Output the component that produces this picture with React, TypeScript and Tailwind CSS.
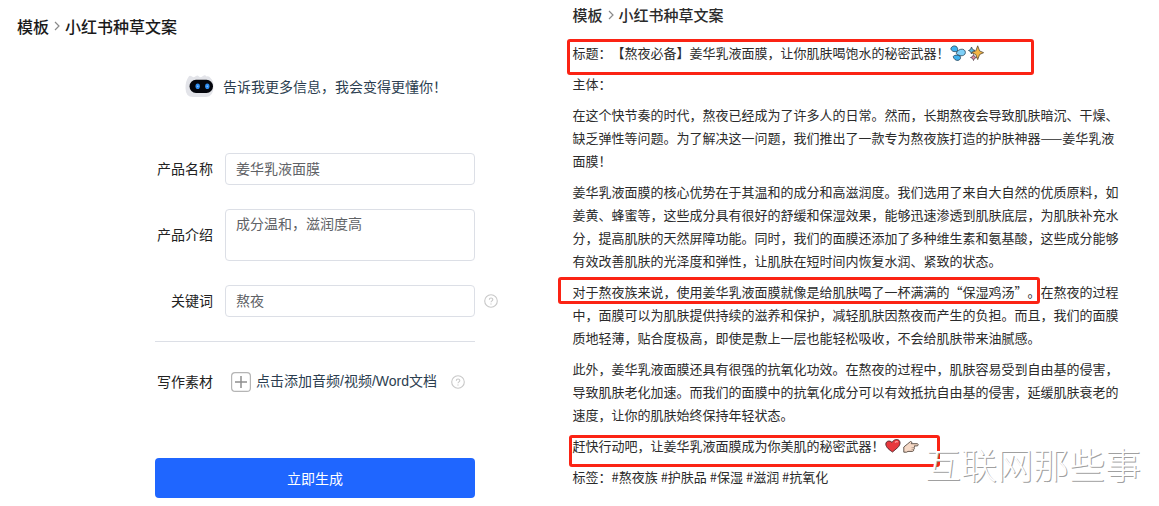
import React from "react";

const bodyText = "text-[13px] leading-[23px] text-[#2b2b2b]";

function RobotIcon() {
  return (
    <svg viewBox="0 0 30 24" className="h-6 w-[30px] shrink-0" aria-hidden="true">
      <path
        d="M3.500 3Q4.500 .6 7 2.500Q9 4 11 2Q12.500 .6 14 2.500Q16 4 18 2Q20 .2 21.500 2.500Q24 1.500 25.500 4Q29 7 28.500 13Q28.500 22.500 21 23H8Q.5 23 .5 14Q.5 7 3.500 3Z"
        fill="#e3e4e9"
      />
      <rect x="4.500" y="5.800" width="23.500" height="13.200" rx="6.500" fill="#04060c" />
      <ellipse cx="12.700" cy="12.300" rx="2.200" ry="2.800" fill="#2f8df0" />
      <ellipse cx="22.300" cy="12.300" rx="2.200" ry="2.800" fill="#2f8df0" />
      <circle cx="12.700" cy="12.300" r=".8" fill="#8cc6ff" />
      <circle cx="22.300" cy="12.300" r=".8" fill="#8cc6ff" />
    </svg>
  );
}

function HelpIcon() {
  return (
    <svg viewBox="0 0 14 14" className="h-[14px] w-[14px] shrink-0" role="img" aria-label="帮助" fill="none" stroke="#c8c8c8">
      <circle cx="7" cy="7" r="6.300" strokeWidth="1.100" />
      <path d="M5.300 5.700C5.300 3.500 8.800 3.500 8.800 5.600C8.800 6.900 7 6.800 7 8.300" strokeWidth="1.100" />
      <path d="M7 9.500V10.600" strokeWidth="1.200" />
    </svg>
  );
}

function PlusIcon() {
  return (
    <svg viewBox="0 0 20 20" className="h-5 w-5 shrink-0" aria-hidden="true" fill="none">
      <rect x=".6" y=".6" width="18.800" height="18.800" rx="3.500" stroke="#b5b5b5" strokeWidth="1.200" />
      <path d="M10 4V16M4 10H16" stroke="#8f8f8f" strokeWidth="1.500" />
    </svg>
  );
}

function Chevron() {
  return (
    <svg viewBox="0 0 6 10" className="h-[10px] w-[6px] shrink-0" aria-hidden="true" fill="none">
      <path d="M1 1L5 5L1 9" stroke="#8a8a8a" strokeWidth="1.200" />
    </svg>
  );
}

const emojiClass = "mr-[2px] inline-block h-4 w-4 align-[-3px]";

function Droplets() {
  return (
    <svg viewBox="0 0 16 16" className={emojiClass} role="img" aria-label="水滴" stroke="#25455c" strokeWidth=".8">
      <path d="M.9 3.500C1.500 1.300 4 .3 6 1.300C7.800 2.300 8 4.300 7.300 6.300C4.500 7.300 1 6.300 .9 3.500Z" fill="#3fb2ee" />
      <path d="M6.200 8.500C7 5.800 9.500 4 12.300 4.200C15 4.500 16 6.800 15 9C13.500 11.500 9 11.300 6.200 8.500Z" fill="#7fd0f8" />
      <path d="M3.200 11.500C4.500 9.800 7.500 9.700 10 11C11.300 12.800 10.300 15 8 15.400C5.500 15.600 3.800 14 3.200 11.500Z" fill="#3fb2ee" />
    </svg>
  );
}

function Sparkles() {
  return (
    <svg viewBox="0 0 16 16" className={emojiClass} role="img" aria-label="闪光" strokeWidth=".8">
      <path d="M3.500 2L4.600 4.400L7 5.500L4.600 6.600L3.500 9L2.500 6.600L.5 5.500L2.500 4.400Z" fill="#55b6df" stroke="#34454f" />
      <path d="M5.500 9.500L6.400 11.600L8.500 12.500L6.400 13.400L5.500 15.500L4.600 13.400L2.500 12.500L4.600 11.600Z" fill="#e58ba5" stroke="#54424a" />
      <path d="M9.700 .8L11.600 5.900L15.600 7.700L11.600 9.500L9.700 14.600L7.800 9.500L3.600 7.700L7.800 5.900Z" fill="#f3b545" stroke="#5a4a2e" />
    </svg>
  );
}

function Heart() {
  return (
    <svg viewBox="0 0 16 16" className={emojiClass} role="img" aria-label="爱心">
      <path
        d="M7.500 14C4.500 12 1 9.500 .8 6.200C.8 2.800 5 2 7 4.500C8.500 1.500 12 .8 14 2.300C16 4.500 14.800 7.500 12.800 9.500C11 11.300 9 12.500 7.500 14Z"
        fill="#e8383d"
        stroke="#4c2529"
        strokeWidth=".9"
      />
      <path d="M10 4.500Q11.500 3 13 4" stroke="#ff9a9a" strokeWidth="1.200" fill="none" />
    </svg>
  );
}

function PointingHand() {
  return (
    <svg viewBox="0 0 16 16" className={emojiClass} role="img" aria-label="手指向右">
      <path
        d="M.8 9L4.500 6L7.500 3.500L9 4.300L8.200 5.700H14.500Q16 6.700 14.500 7.900H11.300Q12 8.800 11.200 9.700Q11.800 10.800 10.700 11.600Q11 13 9.500 13.400H5L3.500 14.200H.8Z"
        fill="#f6d9c6"
        stroke="#54463d"
        strokeWidth=".9"
      />
      <path d="M8.500 9.700H11M8.500 11.600H10.500" stroke="#806b5e" strokeWidth=".5" />
    </svg>
  );
}

function Frame({ className }: { className: string }) {
  return <span aria-hidden="true" className={`pointer-events-none absolute rounded-[3px] border-[3px] border-[#fb2314] ${className}`} />;
}

function FormRow({ id, label, help, children }: { id: string; label: string; help?: boolean; children: React.ReactNode }) {
  return (
    <div className="flex items-center">
      <label htmlFor={id} className="mr-3 w-[58px] shrink-0 pb-[2px] text-right text-[#222]">
        {label}
      </label>
      {children}
      {help && (
        <span className="ml-[9px]">
          <HelpIcon />
        </span>
      )}
    </div>
  );
}

const fieldClass = "w-[250px] rounded border border-[#dcdfe6] bg-white px-[10px] text-sm text-[#606266] outline-none";

export default function App() {
  return (
    <div className="relative flex min-h-screen bg-white font-['Noto_Sans_CJK_SC','Noto_Sans',sans-serif] [text-spacing-trim:space-all]">
      <section className="w-[49.4%] shrink-0 pt-[14px] text-sm">
        <h1 className="flex items-center gap-[5px] pl-[17px] text-base font-medium leading-6 text-[#1a1a1a]">
          模板
          <Chevron />
          小红书种草文案
        </h1>

        <form className="ml-[155px] mt-9 w-[344px]" onSubmit={(e) => e.preventDefault()}>
          <p className="flex items-center gap-2 pl-[30px] leading-6 text-[#2c3e50]">
            <RobotIcon />
            告诉我更多信息，我会变得更懂你！
          </p>

          <div className="mt-[55px] flex flex-col gap-6">
            <FormRow id="name" label="产品名称">
              <input id="name" defaultValue="姜华乳液面膜" className={`${fieldClass} h-8 pb-[2px]`} />
            </FormRow>
            <FormRow id="intro" label="产品介绍">
              <textarea id="intro" defaultValue="成分温和，滋润度高" className={`${fieldClass} block h-[52px] resize-none py-[3px] leading-[21px]`} />
            </FormRow>
            <FormRow id="keyword" label="关键词" help>
              <input id="keyword" defaultValue="熬夜" className={`${fieldClass} h-8 pb-[2px]`} />
            </FormRow>
          </div>

          <hr className="mt-6 w-80 border-[#dcdfe6]" />

          <div className="mt-[28px] flex items-center">
            <span className="w-[58px] shrink-0 pb-[2px] text-right text-[#222]">写作素材</span>
            <button type="button" className="ml-[18px] flex h-6 items-center gap-[5px] text-[#2c3e50]">
              <PlusIcon />
              <span className="pb-[2px] font-['Liberation_Sans','Noto_Sans_CJK_SC',sans-serif]">点击添加音频/视频/Word文档</span>
            </button>
            <span className="ml-[14px]">
              <HelpIcon />
            </span>
          </div>

          <button type="submit" className="mt-16 h-10 w-80 rounded bg-[#1f66ff] text-white">
            立即生成
          </button>
        </form>
      </section>

      <section className="min-w-0 flex-1 pt-[3px]">
        <h2 className="flex items-center gap-[5px] text-[15px] font-medium leading-6 text-[#2b2b2b]">
          模板
          <Chevron />
          小红书种草文案
        </h2>
        <article className={`mt-[14px] flex max-w-[550px] flex-col gap-2 ${bodyText}`}>
          <p className="relative">
            标题：【熬夜必备】姜华乳液面膜，让你肌肤喝饱水的秘密武器！
            <Droplets />
            <Sparkles />
            <Frame className="-left-[6px] -top-[2px] h-9 w-[467px]" />
          </p>
          <p>主体：</p>
          <p>
            在这个快节奏的时代，熬夜已经成为了许多人的日常。然而，长期熬夜会导致肌肤暗沉、干燥、缺乏弹性等问题。为了解决这一问题，我们推出了一款专为熬夜族打造的护肤神器——姜华乳液面膜！
          </p>
          <p>
            姜华乳液面膜的核心优势在于其温和的成分和高滋润度。我们选用了来自大自然的优质原料，如姜黄、蜂蜜等，这些成分具有很好的舒缓和保湿效果，能够迅速渗透到肌肤底层，为肌肤补充水分，提高肌肤的天然屏障功能。同时，我们的面膜还添加了多种维生素和氨基酸，这些成分能够有效改善肌肤的光泽度和弹性，让肌肤在短时间内恢复水润、紧致的状态。
          </p>
          <p className="relative">
            对于熬夜族来说，使用姜华乳液面膜就像是给肌肤喝了一杯满满的“保湿鸡汤”。在熬夜的过程中，面膜可以为肌肤提供持续的滋养和保护，减轻肌肤因熬夜而产生的负担。而且，我们的面膜质地轻薄，贴合度极高，即使是敷上一层也能轻松吸收，不会给肌肤带来油腻感。
            <Frame className="-left-[15px] -top-[3px] h-[27px] w-[482px]" />
          </p>
          <p>
            此外，姜华乳液面膜还具有很强的抗氧化功效。在熬夜的过程中，肌肤容易受到自由基的侵害，导致肌肤老化加速。而我们的面膜中的抗氧化成分可以有效抵抗自由基的侵害，延缓肌肤衰老的速度，让你的肌肤始终保持年轻状态。
          </p>
          <p className="relative">
            赶快行动吧，让姜华乳液面膜成为你美肌的秘密武器！
            <Heart />
            <PointingHand />
            <Frame className="-left-1 top-px h-8 w-[371px]" />
          </p>
          <p>标签：#熬夜族 #护肤品 #保湿 #滋润 #抗氧化</p>
        </article>
      </section>

      <div className="pointer-events-none absolute right-[18px] top-[443px] text-4xl font-light leading-10 text-white [text-shadow:1px_1px_0_#a0a0a0]">
        互联网那些事
      </div>
    </div>
  );
}
